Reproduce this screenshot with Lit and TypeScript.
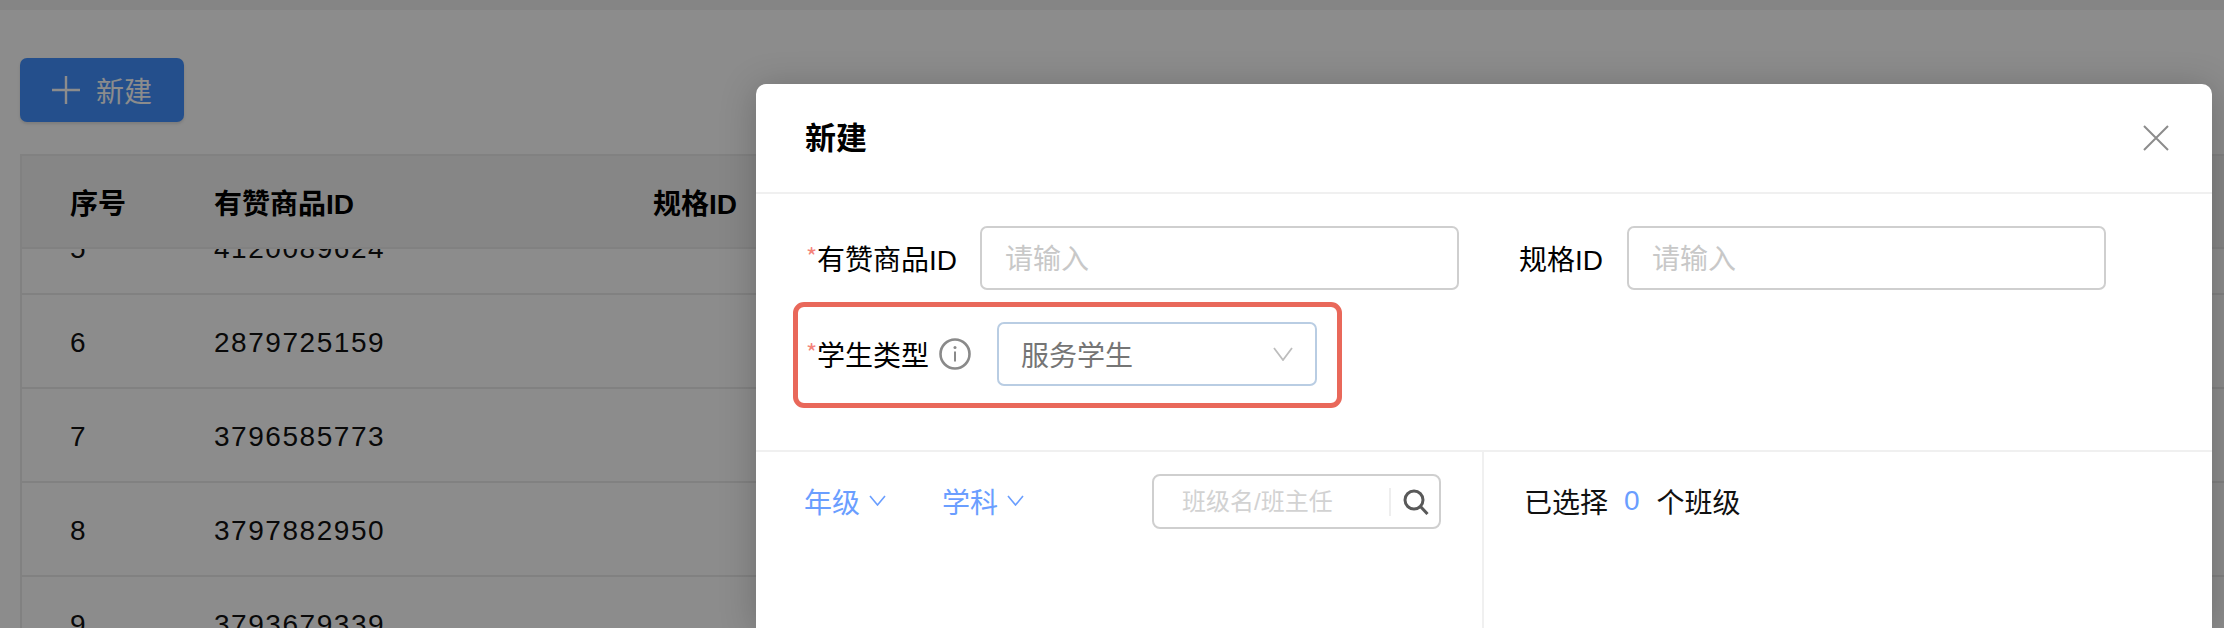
import { LitElement, html, css, svg } from "lit";
import { customElement } from "lit/decorators.js";
import { map } from "lit/directives/map.js";

const rows = [
  { no: "5", id: "4120089624" },
  { no: "6", id: "2879725159" },
  { no: "7", id: "3796585773" },
  { no: "8", id: "3797882950" },
  { no: "9", id: "3793679339" },
];

const chevron = svg`<polyline points="1,1 8.5,10 16,1" fill="none" stroke="currentColor" stroke-width="1.6"/>`;

@customElement("app-root")
export class AppRoot extends LitElement {
  static styles = css`
    :host {
      display: block;
      position: relative;
      width: 2224px;
      height: 628px;
      overflow: hidden;
      background: #fff;
      font-family: "Liberation Sans", "Noto Sans CJK SC", sans-serif;
      font-size: 28px;
      color: #111;
    }
    * {
      box-sizing: border-box;
    }

    .topbar {
      height: 10px;
      background: #f2f2f2;
    }
    .page {
      padding: 48px 0 0 20px;
    }
    .add {
      display: flex;
      align-items: center;
      width: 164px;
      height: 64px;
      padding-left: 32px;
      gap: 16px;
      border-radius: 7px;
      background: #4391ff;
      color: #fff;
      box-shadow: 0 2px 3px rgba(0, 0, 0, 0.12);
    }
    .add svg {
      width: 28px;
      height: 28px;
    }

    .table {
      margin-top: 32px;
      border-left: 2px solid #ebebeb;
    }
    .row {
      display: grid;
      grid-template-columns: 144px 439px 1fr;
      align-items: center;
      padding-left: 48px;
    }
    .head {
      height: 95px;
      background: #f5f5f5;
      border-top: 2px solid #ebebeb;
      border-bottom: 2px solid #ebebeb;
      font-weight: 700;
      color: #000;
    }
    .body {
      height: 379px;
      overflow: hidden;
    }
    .rows {
      margin-top: -48px;
    }
    .cell {
      height: 94px;
      padding-top: 3px;
      border-bottom: 2px solid #ebebeb;
    }
    .digits {
      letter-spacing: 1.55px;
    }

    .mask {
      position: absolute;
      inset: 0;
      background: rgba(0, 0, 0, 0.45);
    }

    .modal {
      position: absolute;
      left: 756px;
      top: 84px;
      bottom: 0;
      width: 1456px;
      background: #fff;
      border-radius: 10px 10px 0 0;
      box-shadow: 0 4px 36px rgba(0, 0, 0, 0.22);
      color: #000;
    }
    .modal-head {
      display: flex;
      align-items: center;
      justify-content: space-between;
      height: 110px;
      padding: 0 43px 0 49px;
      border-bottom: 2px solid #f0f0f0;
    }
    .modal-title {
      padding-bottom: 5px;
      font-size: 31px;
      font-weight: 700;
    }
    .close {
      width: 26px;
      height: 26px;
      color: #8c8c8c;
    }

    .form {
      display: flex;
      flex-direction: column;
      gap: 32px;
      height: 258px;
      padding: 32px 0 0 49px;
      border-bottom: 2px solid #f0f0f0;
    }
    .form-row {
      display: flex;
      align-items: center;
      position: relative;
    }
    .label {
      display: flex;
      align-items: center;
      white-space: nowrap;
    }
    .label.first {
      width: 175px;
    }
    .label.second {
      width: 108px;
      margin-left: 60px;
    }
    .star {
      width: 12px;
      padding: 0 0 6px 1px;
      font-family: "Noto Sans CJK SC", sans-serif;
      font-size: 24px;
      color: #f4837a;
    }
    .input {
      display: block;
      width: 479px;
      height: 64px;
      padding: 4px 23px 0;
      border: 2px solid #cfcfcf;
      border-radius: 7px;
      outline: none;
      background: #fff;
      font: inherit;
    }
    .input::placeholder {
      color: #c8c8c8;
      opacity: 1;
    }
    .info {
      width: 32px;
      height: 32px;
      margin: 0 26px 0 10px;
      flex: none;
    }
    .select {
      display: flex;
      align-items: center;
      justify-content: space-between;
      width: 320px;
      height: 64px;
      padding: 0 22px;
      border: 2px solid #b9cde3;
      border-radius: 7px;
      color: #757575;
    }
    .select svg {
      width: 20px;
      height: 14px;
      color: #bdbdbd;
    }
    .highlight {
      position: absolute;
      left: -12px;
      top: -20px;
      width: 549px;
      height: 106px;
      border: 5px solid #e9685a;
      border-radius: 11px;
      pointer-events: none;
    }

    .bottom {
      display: grid;
      grid-template-columns: 728px 1fr;
      height: 200px;
    }
    .pick {
      display: flex;
      align-items: flex-start;
      padding: 22px 41px 0 48px;
      border-right: 2px solid #f0f0f0;
    }
    .filter {
      display: flex;
      align-items: center;
      height: 55px;
      gap: 9px;
      margin-right: 56px;
      padding-bottom: 2px;
      color: #6a9eff;
    }
    .filter svg {
      width: 17px;
      height: 11px;
    }
    .search {
      display: flex;
      align-items: center;
      width: 289px;
      height: 55px;
      margin-left: auto;
      padding: 0 10px 0 28px;
      border: 2px solid #cfcfcf;
      border-radius: 8px;
    }
    .search input {
      flex: 1;
      min-width: 0;
      height: 28px;
      padding: 0;
      border: none;
      border-right: 2px solid #eee;
      outline: none;
      background: none;
      font: inherit;
      font-size: 24px;
    }
    .search input::placeholder {
      color: #d2d2d2;
      opacity: 1;
    }
    .search svg {
      width: 26px;
      height: 26px;
      margin-left: 12px;
      flex: none;
    }
    .picked {
      display: flex;
      align-items: center;
      gap: 16px;
      height: 55px;
      margin: 22px 0 0 40px;
      padding-bottom: 1px;
      color: #111;
    }
    .picked b {
      font-weight: 400;
      color: #6a9eff;
      margin-right: 1px;
    }
  `;

  render() {
    return html`
      <div class="topbar"></div>
      <div class="page">
        <div class="add">
          <svg viewBox="0 0 28 28"><path d="M14 0v28M0 14h28" stroke="#fff" stroke-width="2.4" fill="none" /></svg>
          <span>新建</span>
        </div>
        <div class="table">
          <div class="row head">
            <span>序号</span>
            <span>有赞商品ID</span>
            <span>规格ID</span>
          </div>
          <div class="body">
            <div class="rows">
              ${map(rows, (r) => html`
                <div class="row cell">
                  <span class="digits">${r.no}</span>
                  <span class="digits">${r.id}</span>
                </div>
              `)}
            </div>
          </div>
        </div>
      </div>

      <div class="mask"></div>

      <div class="modal">
        <div class="modal-head">
          <span class="modal-title">新建</span>
          <svg class="close" viewBox="0 0 26 26">
            <path d="M1 1l24 24M25 1L1 25" stroke="currentColor" stroke-width="2" fill="none" />
          </svg>
        </div>

        <div class="form">
          <div class="form-row">
            <span class="label first"><span class="star">*</span>有赞商品ID</span>
            <input class="input" placeholder="请输入" />
            <span class="label second">规格ID</span>
            <input class="input" placeholder="请输入" />
          </div>
          <div class="form-row">
            <span class="label"><span class="star">*</span>学生类型</span>
            <svg class="info" viewBox="0 0 32 32">
              <circle cx="16" cy="16" r="14.5" fill="none" stroke="#8a8a8a" stroke-width="2.6" />
              <path d="M16 13.5v10" stroke="#8a8a8a" stroke-width="2" fill="none" />
              <circle cx="16" cy="9.5" r="1.5" fill="#8a8a8a" />
            </svg>
            <div class="select">
              <span>服务学生</span>
              <svg viewBox="0 0 20 14"><polyline points="1,1 10,13 19,1" fill="none" stroke="currentColor" stroke-width="1.8" /></svg>
            </div>
            <div class="highlight"></div>
          </div>
        </div>

        <div class="bottom">
          <div class="pick">
            <div class="filter"><span>年级</span><svg viewBox="0 0 17 11">${chevron}</svg></div>
            <div class="filter"><span>学科</span><svg viewBox="0 0 17 11">${chevron}</svg></div>
            <div class="search">
              <input placeholder="班级名/班主任" />
              <svg viewBox="0 0 26 26">
                <circle cx="11" cy="11" r="9" fill="none" stroke="#595959" stroke-width="3" />
                <path d="M17.5 17.5l7 7.5" stroke="#595959" stroke-width="3" fill="none" />
              </svg>
            </div>
          </div>
          <div class="picked"><span>已选择</span><b>0</b><span>个班级</span></div>
        </div>
      </div>
    `;
  }
}
